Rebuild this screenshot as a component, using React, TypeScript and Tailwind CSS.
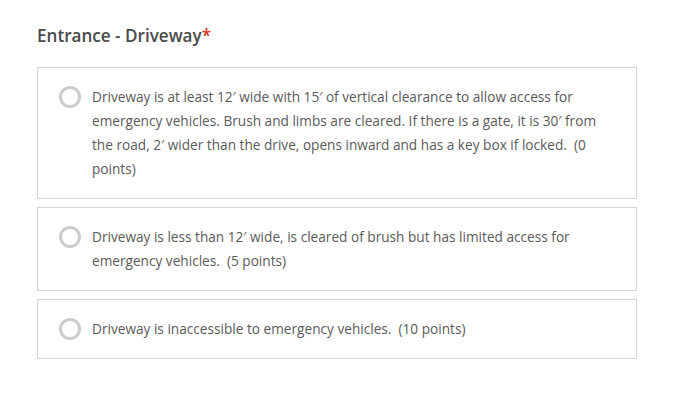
const options = [
  "Driveway is at least 12\u2032 wide with 15\u2032 of vertical clearance to allow access for emergency vehicles. Brush and limbs are cleared. If there is a gate, it is 30\u2032 from the road, 2\u2032 wider than the drive, opens inward and has a key box if locked.  (0 points)",
  "Driveway is less than 12\u2032 wide, is cleared of brush but has limited access for emergency vehicles.  (5 points)",
  "Driveway is inaccessible to emergency vehicles.  (10 points)",
]

export default function App() {
  return (
    <div className="min-h-screen bg-white px-[37px] pt-[24px]" style={{ fontFamily: '"Open Sans", Lato, sans-serif' }}>
      <h2 className="w-[600px] text-[17.1px] font-semibold leading-6 text-[#4a4a4a]">
        Entrance - Driveway<span className="text-[#d83020]">*</span>
      </h2>
      <div className="mt-[19px] flex w-[600px] flex-col gap-[8px]">
        {options.map((text) => (
          <label key={text} className="flex items-start border border-[#d4d4d4] bg-white py-[17px] pl-[21px] pr-[30px]">
            <span className="mt-[1px] h-[22px] w-[22px] shrink-0 rounded-full border-[3px] border-[#cccccc]"></span>
            <span className="ml-[11px] whitespace-pre-wrap text-[13.65px] leading-6 text-[#5a5a5a]">{text}</span>
          </label>
        ))}
      </div>
    </div>
  )
}
